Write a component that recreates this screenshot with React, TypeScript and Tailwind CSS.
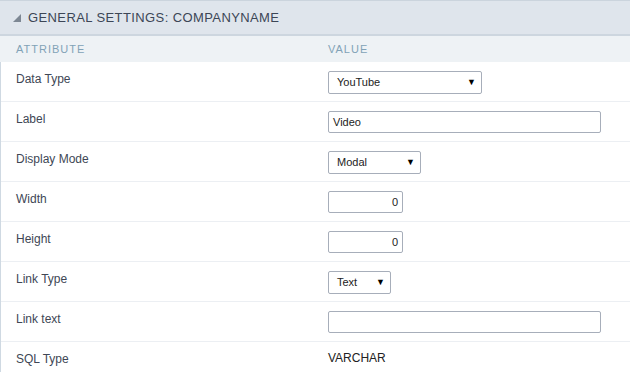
const rows: { label: string; kind: "select" | "input" | "num" | "text"; value: string; w: string }[] = [
  { label: "Data Type", kind: "select", value: "YouTube", w: "w-[154px]" },
  { label: "Label", kind: "input", value: "Video", w: "w-[273px]" },
  { label: "Display Mode", kind: "select", value: "Modal", w: "w-[93px]" },
  { label: "Width", kind: "num", value: "0", w: "w-[75px]" },
  { label: "Height", kind: "num", value: "0", w: "w-[75px]" },
  { label: "Link Type", kind: "select", value: "Text", w: "w-[63px]" },
  { label: "Link text", kind: "input", value: "", w: "w-[273px]" },
  { label: "SQL Type", kind: "text", value: "VARCHAR", w: "" },
];

function Field({ row }: { row: (typeof rows)[number] }) {
  if (row.kind === "select") {
    return (
      <div
        className={`${row.w} h-[23px] border border-[#a7aeba] rounded-[2px] bg-white flex items-center justify-between pl-[8px] pr-[5px] text-[11px] text-[#222]`}
      >
        <span>{row.value}</span>
        <span className="text-[9px] text-black">▼</span>
      </div>
    );
  }
  if (row.kind === "input" || row.kind === "num") {
    return (
      <div
        className={`${row.w} h-[22px] border border-[#a7aeba] rounded-[2px] bg-white flex items-center px-[4px] text-[11px] text-[#222] ${
          row.kind === "num" ? "justify-end" : ""
        }`}
      >
        {row.value}
      </div>
    );
  }
  return <div className="text-[12px] text-[#222] -mt-[1px]">{row.value}</div>;
}

export default function App() {
  return (
    <div className="w-[630px] h-[372px] bg-white overflow-hidden font-['Liberation_Sans',Arial,sans-serif]">
      <div className="h-[36px] bg-[#dfe5ec] border-t border-[#cbd4dd] border-b-2 border-b-[#cdd6df] flex items-center pl-[13px]">
        <svg width="8" height="8" viewBox="0 0 8 8" className="mr-[7px]">
          <polygon points="8,0 8,8 0,8" fill="#7d8793" />
        </svg>
        <span className="text-[13px] tracking-[0.4px] text-[#3c4656]">GENERAL SETTINGS: COMPANYNAME</span>
      </div>
      <div className="h-[26px] bg-[#eef2f5] flex items-center text-[11px] tracking-[1px] text-[#82a2b7]">
        <div className="w-[328px] pl-[16px]">ATTRIBUTE</div>
        <div>VALUE</div>
      </div>
      <div className="border-l border-[#cfd9e2]">
        {rows.map((r) => (
          <div key={r.label} className="h-[40px] border-b border-[#eceff3] flex">
            <div className="w-[327px] pl-[15px] pt-[8px] text-[12px] text-[#404755]">{r.label}</div>
            <div className={r.kind === "text" ? "pt-[8px]" : "pt-[9px]"}>
              <Field row={r} />
            </div>
          </div>
        ))}
      </div>
    </div>
  );
}
